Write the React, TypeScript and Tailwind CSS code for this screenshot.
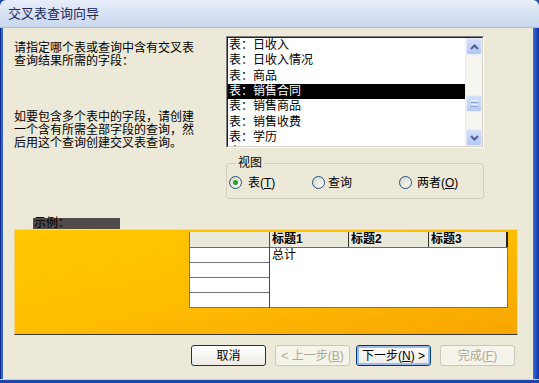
import React from 'react';

const tables = ['日收入', '日收入情况', '商品', '销售合同', '销售商品', '销售收费', '学历', '员工'];

const Chevron = ({ up }: { up?: boolean }) => (
  <svg width="9" height="6" viewBox="0 0 9 6" className={up ? '' : 'rotate-180'}>
    <path d="M1 5 L4.5 1.5 L8 5" fill="none" stroke="#4d6185" strokeWidth="2" />
  </svg>
);

const ScrollBtn = ({ up }: { up?: boolean }) => (
  <div className="h-[17px] flex items-center justify-center rounded-[2px] border border-[#e6edfd] bg-gradient-to-b from-[#d4e0fd] to-[#b3c7f6]">
    <Chevron up={up} />
  </div>
);

const Radio = ({ checked }: { checked?: boolean }) => (
  <div className="w-[13px] h-[13px] shrink-0 rounded-full border border-[#1c5180] bg-gradient-to-br from-[#d6d5cc] to-white flex items-center justify-center">
    {checked && <div className="w-[5px] h-[5px] rounded-full bg-[#2aa12a]" />}
  </div>
);

const Button = ({ kind, children }: { kind: 'normal' | 'disabled' | 'default'; children: React.ReactNode }) => {
  const cls =
    kind === 'disabled'
      ? 'border-[#c9c7ba] bg-[#f5f4ea] text-[#aca899]'
      : kind === 'default'
      ? 'border-[#003c74] bg-gradient-to-b from-white to-[#ecebe6] text-black shadow-[inset_0_0_0_2px_#9fbaf0]'
      : 'border-[#003c74] bg-gradient-to-b from-white to-[#ecebe6] text-black';
  return (
    <div className={`w-[75px] h-[21px] flex items-center justify-center rounded-[3px] border whitespace-nowrap ${cls}`}>
      {children}
    </div>
  );
};

const App = () => {
  return (
    <div className="w-[539px] h-[383px] flex flex-col bg-[#1d45ae] text-[12px] text-black font-['Liberation_Sans','Noto_Sans_CJK_SC',sans-serif]">
      {/* title bar */}
      <div className="h-[28px] shrink-0 flex items-center pl-[8px] rounded-t-[6px] border-b border-[#aebdd6] bg-gradient-to-b from-[#e8eef9] to-[#c9d7ee] text-[13px] text-[#17285c]">
        交叉表查询向导
      </div>

      <div className="flex flex-1">
        <div className="w-[3px] border-l border-[#0c2a8a] bg-[#3462d1]" />

        <div className="flex-1 flex flex-col bg-[#ece9d8] pl-[11px] pt-[8px]">
          <div className="flex">
            <div className="w-[212px] pt-[6px] leading-[13px] whitespace-nowrap">
              <p>
                请指定哪个表或查询中含有交叉表
                <br />
                查询结果所需的字段：
              </p>
              <p className="mt-[43px]">
                如要包含多个表中的字段，请创建
                <br />
                一个含有所需全部字段的查询，然
                <br />
                后用这个查询创建交叉表查询。
              </p>
            </div>

            <div className="flex flex-col w-[258px]">
              {/* list box */}
              <div className="h-[112px] border border-t-[#808080] border-l-[#808080] border-r-white border-b-white">
                <div className="h-full flex border border-t-[#202020] border-l-[#202020] border-r-[#d4d0c8] border-b-[#d4d0c8] bg-white overflow-hidden">
                  <div className="flex-1 flex flex-col overflow-hidden">
                    {tables.map((t, i) => (
                      <div
                        key={t}
                        className={`h-[15.3px] shrink-0 flex items-center pl-[1px] leading-[15px] whitespace-nowrap ${
                          i === 3 ? 'bg-black text-white' : ''
                        }`}
                      >
                        表：{t}
                      </div>
                    ))}
                  </div>
                  <div className="w-[17px] flex flex-col bg-[#f6f5f0] border-l border-[#eeede5]">
                    <ScrollBtn up />
                    <div className="flex-1 pt-[40px]">
                      <div className="h-[17px] flex flex-col items-center justify-center gap-[1px] rounded-[2px] border border-[#e6edfd] bg-gradient-to-b from-[#d4e0fd] to-[#b8cbf7]">
                        <div className="w-[7px] h-[1px] bg-[#eef4fe]" />
                        <div className="w-[7px] h-[1px] bg-[#8da6e0]" />
                        <div className="w-[7px] h-[1px] bg-[#eef4fe]" />
                        <div className="w-[7px] h-[1px] bg-[#8da6e0]" />
                      </div>
                    </div>
                    <ScrollBtn />
                  </div>
                </div>
              </div>

              {/* view group */}
              <fieldset className="mt-[9px] h-[42px] border border-[#d0d0bf] rounded-[3px] pl-[2px]">
                <legend className="ml-[7px] px-[2px] leading-[12px]">视图</legend>
                <div className="flex items-center h-[13px] mt-[7px]">
                  <div className="w-[83px] flex items-center gap-[6px]">
                    <Radio checked />
                    <span>
                      表(<span className="underline">T</span>)
                    </span>
                  </div>
                  <div className="w-[87px] flex items-center gap-[3px]">
                    <Radio />
                    <span>查询</span>
                  </div>
                  <div className="flex items-center gap-[5px]">
                    <Radio />
                    <span>
                      两者(<span className="underline">O</span>)
                    </span>
                  </div>
                </div>
              </fieldset>
            </div>
          </div>

          {/* sample */}
          <div className="mt-[19px] ml-[19px] w-[87px] h-[11px] bg-[#4e4b48] leading-[11px] pl-[1px]">示例：</div>
          <div className="w-[504px] h-[106px] pl-[174px] pt-[2px] border border-t-[#f7dc8e] border-l-[#f3d27a] border-r-[#fde3a0] border-b-[#3a3a3a] bg-gradient-to-br from-[#ffc800] via-[#ffbd00] to-[#f7a500]">
            <div className="flex">
              <div className="w-[80px] flex flex-col border-l border-[#6f747a]">
                <div className="h-[16px] bg-[#ebe8dc] border-b border-[#6b6b6b]" />
                <div className="h-[15px] bg-white border-b border-[#6f747a]" />
                <div className="h-[15px] bg-white border-b border-[#6f747a]" />
                <div className="h-[15px] bg-white border-b border-[#6f747a]" />
                <div className="h-[15px] bg-white border-b border-[#6f747a]" />
              </div>
              <div className="flex flex-col border-l border-[#4a4a4a]">
                <div className="flex h-[16px] bg-[#ebe8dc] border-b border-[#6b6b6b] font-bold leading-[15px]">
                  <div className="w-[79px] pl-[2px] border-r border-[#333]">标题1</div>
                  <div className="w-[80px] pl-[2px] border-r border-[#333]">标题2</div>
                  <div className="w-[79px] pl-[2px] border-r-2 border-[#222]">标题3</div>
                </div>
                <div className="h-[60px] bg-white border-r border-b border-[#6f747a] pl-[2px] leading-[15px]">总计</div>
              </div>
            </div>
          </div>

          {/* buttons */}
          <div className="mt-[10px] ml-[177px] flex">
            <Button kind="normal">取消</Button>
            <div className="ml-[9px]">
              <Button kind="disabled">
                &lt; 上一步(<span className="underline">B</span>)
              </Button>
            </div>
            <div className="ml-[6px]">
              <Button kind="default">
                下一步(<span className="underline">N</span>) &gt;
              </Button>
            </div>
            <div className="ml-[9px]">
              <Button kind="disabled">
                完成(<span className="underline">F</span>)
              </Button>
            </div>
          </div>
        </div>

        <div className="w-[6px] bg-gradient-to-r from-[#3a6ee0] to-[#0b2f9e]" />
      </div>

      <div className="h-[4px] shrink-0 border-t border-[#c8d0dd]" />
    </div>
  );
};

export default App;
